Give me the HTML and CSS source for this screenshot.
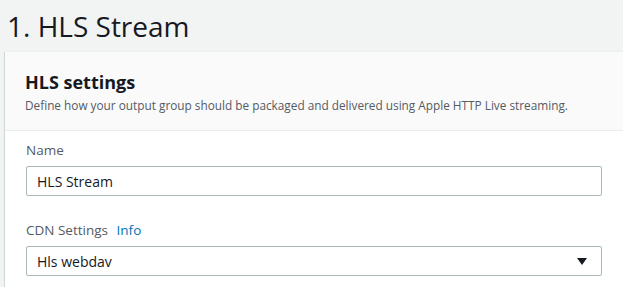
FILE: index.html
```html
<!DOCTYPE html>
<html lang="en">
<head>
  <meta charset="UTF-8">
  <title>HLS Stream</title>
  <link rel="stylesheet" href="styles.css">
</head>
<body>
  <h1 class="page-title">1. HLS Stream</h1>
  <div class="card">
    <div class="card-header">
      <h2>HLS settings</h2>
      <p>Define how your output group should be packaged and delivered using Apple HTTP Live streaming.</p>
    </div>
    <div class="card-body">
      <div class="field">
        <label class="field-label">Name</label>
        <input type="text" class="text-input" value="HLS Stream">
      </div>
      <div class="field">
        <label class="field-label">CDN Settings <a href="#" class="info-link">Info</a></label>
        <div class="select-box">
          <span>Hls webdav</span>
          <svg class="caret" viewBox="0 0 10 7" width="10" height="7"><path d="M0 0h10L5 7z" fill="#16191f"/></svg>
        </div>
      </div>
    </div>
  </div>
</body>
</html>
```

FILE: styles.css
```css
* {
  margin: 0;
  padding: 0;
  box-sizing: border-box;
  font-family: 'Open Sans', sans-serif;
}

body {
  background: #f2f3f3;
  color: #16191f;
  padding: 0 0 0 5px;
  overflow: hidden;
}

.page-title {
  font-size: 28px;
  font-weight: 400;
  line-height: 52px;
  padding-left: 2px;
  height: 52px;
}

.card {
  width: 640px;
  background: #fff;
  box-shadow: 0 1px 1px rgba(0, 31, 63, 0.2), -1px 0 1px rgba(0, 31, 63, 0.1);
}

.card-header {
  background: #fafafa;
  border-bottom: 1px solid #eaeded;
  padding: 18px 20px 17px;
  height: 79px;
}

.card-header h2 {
  font-size: 18px;
  font-weight: 700;
  line-height: 24px;
}

.card-header p {
  font-size: 11.8px;
  color: #545b64;
  line-height: 18px;
  margin-top: 2px;
}

.card-body {
  padding: 9px 21px 11px;
  display: flex;
  flex-direction: column;
  gap: 24px;
}

.field-label {
  display: block;
  font-size: 13.5px;
  color: #545b64;
  line-height: 20px;
  margin-bottom: 6px;
}

.info-link {
  color: #0073bb;
  text-decoration: none;
  margin-left: 5px;
}

.text-input,
.select-box {
  width: 576px;
  height: 30px;
  border: 1px solid #aab7b8;
  border-radius: 2px;
  background: #fff;
  padding: 0 10px;
  font-size: 14px;
  color: #16191f;
}

.select-box {
  display: flex;
  align-items: center;
  justify-content: space-between;
  padding-right: 14px;
}
```
